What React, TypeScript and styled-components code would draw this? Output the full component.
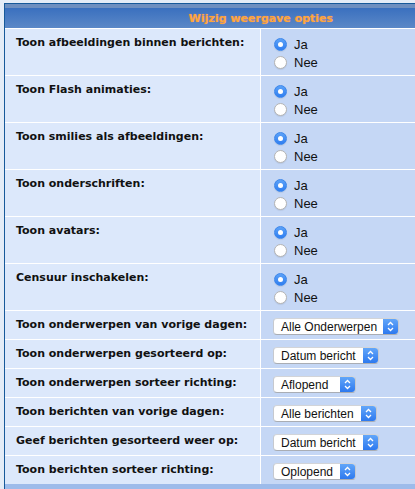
import React from 'react';
import styled, { createGlobalStyle } from 'styled-components';

const GlobalStyle = createGlobalStyle`
  html, body {
    margin: 0;
    padding: 0;
    overflow: hidden;
    background: #e4ecf7;
  }
`;

// the page is narrower than the table, so it is cut off on the right
const Viewport = styled.div`
  width: 100vw;
  height: 100vh;
  overflow: hidden;
`;

const Frame = styled.div`
  margin: 3px 0 0 4px;
  width: 512px;
  border: 1px solid #17599a;
  background: #ffffff;
`;

const TopStrip = styled.div`
  height: 4px;
  background: #6e8fc0;
`;

const Header = styled.div`
  height: 20px;
  display: flex;
  align-items: center;
  justify-content: center;
  background: linear-gradient(to bottom, #3a70bf, #5b88c7);
  color: #fba83a;
  font-family: 'DejaVu Sans', Verdana, sans-serif;
  font-size: 11px;
  font-weight: bold;
  text-shadow: 0 0 1px #e2849a;
`;

const Grid = styled.div`
  display: grid;
  grid-template-columns: 255px 256px;
  gap: 1px;
  padding-top: 1px;
  background: #ffffff;
`;

const Label = styled.div`
  background: #dce8fb;
  padding: 7px 11px 0;
  font-family: 'DejaVu Sans', Verdana, sans-serif;
  font-size: 11px;
  font-weight: bold;
  color: #111;
`;

const Control = styled.div<{ $kind: 'radio' | 'select' }>`
  background: #c5d7f5;
  padding: ${(p) => (p.$kind === 'radio' ? '6px 12px 4px 13px' : '7px 12px 4px 12px')};
  display: flex;
  flex-direction: column;
  align-items: flex-start;
`;

const Option = styled.label`
  height: 18px;
  display: flex;
  align-items: center;
  gap: 7px;
  font-family: 'Liberation Sans', Arial, sans-serif;
  font-size: 13px;
  color: #111;
`;

const Radio = styled.input`
  appearance: none;
  margin: 0;
  width: 13px;
  height: 13px;
  border-radius: 50%;
  box-sizing: border-box;
  border: 1px solid #b4b4b4;
  background: #ffffff;
  box-shadow: 0 1px 1px rgba(0, 0, 0, 0.08);
  display: grid;
  place-items: center;

  &:checked {
    border-color: #3c86ea;
    background: linear-gradient(to bottom, #5ca2f8, #2f7ef1);
  }

  &:checked::after {
    content: '';
    width: 5px;
    height: 5px;
    border-radius: 50%;
    background: #ffffff;
  }
`;

const SelectBox = styled.div<{ $width: number }>`
  width: ${(p) => p.$width}px;
  height: 17px;
  box-sizing: border-box;
  display: flex;
  border-radius: 4px;
  border: 1px solid #c6c9cf;
  border-top-color: #d2d4d8;
  border-bottom-color: #a9adb4;
  background: #ffffff;
  overflow: hidden;
`;

const SelectText = styled.span`
  flex: 1;
  padding-left: 7px;
  display: flex;
  align-items: center;
  font-family: 'Liberation Sans', Arial, sans-serif;
  font-size: 12px;
  color: #111;
  white-space: nowrap;
`;

const Stepper = styled.span`
  width: 15px;
  display: flex;
  align-items: center;
  justify-content: center;
  background: linear-gradient(to bottom, #62a6f9, #2d79ef);
`;

const Footer = styled.div`
  height: 20px;
  background: #9dbbea;
`;

const Chevrons = () => (
  <svg width="7" height="11" viewBox="0 0 7 11">
    <path d="M1 4 L3.5 1.5 L6 4 M1 7 L3.5 9.5 L6 7" fill="none" stroke="#ffffff" strokeWidth="1.3" />
  </svg>
);

const Select = ({ value, width }: { value: string; width: number }) => (
  <SelectBox $width={width}>
    <SelectText>{value}</SelectText>
    <Stepper>
      <Chevrons />
    </Stepper>
  </SelectBox>
);

const radioRows = [
  'Toon afbeeldingen binnen berichten:',
  'Toon Flash animaties:',
  'Toon smilies als afbeeldingen:',
  'Toon onderschriften:',
  'Toon avatars:',
  'Censuur inschakelen:',
];

const selectRows = [
  { label: 'Toon onderwerpen van vorige dagen:', value: 'Alle Onderwerpen', width: 126 },
  { label: 'Toon onderwerpen gesorteerd op:', value: 'Datum bericht', width: 106 },
  { label: 'Toon onderwerpen sorteer richting:', value: 'Aflopend', width: 83 },
  { label: 'Toon berichten van vorige dagen:', value: 'Alle berichten', width: 104 },
  { label: 'Geef berichten gesorteerd weer op:', value: 'Datum bericht', width: 106 },
  { label: 'Toon berichten sorteer richting:', value: 'Oplopend', width: 83 },
];

const App = () => (
  <Viewport>
    <GlobalStyle />
    <Frame>
      <TopStrip />
      <Header>Wijzig weergave opties</Header>
      <Grid>
        {radioRows.map((label, i) => (
          <React.Fragment key={label}>
            <Label>{label}</Label>
            <Control $kind="radio">
              <Option>
                <Radio type="radio" name={`opt${i}`} defaultChecked />
                Ja
              </Option>
              <Option>
                <Radio type="radio" name={`opt${i}`} />
                Nee
              </Option>
            </Control>
          </React.Fragment>
        ))}
        {selectRows.map((row) => (
          <React.Fragment key={row.label}>
            <Label>{row.label}</Label>
            <Control $kind="select">
              <Select value={row.value} width={row.width} />
            </Control>
          </React.Fragment>
        ))}
      </Grid>
      <Footer />
    </Frame>
  </Viewport>
);

export default App;
